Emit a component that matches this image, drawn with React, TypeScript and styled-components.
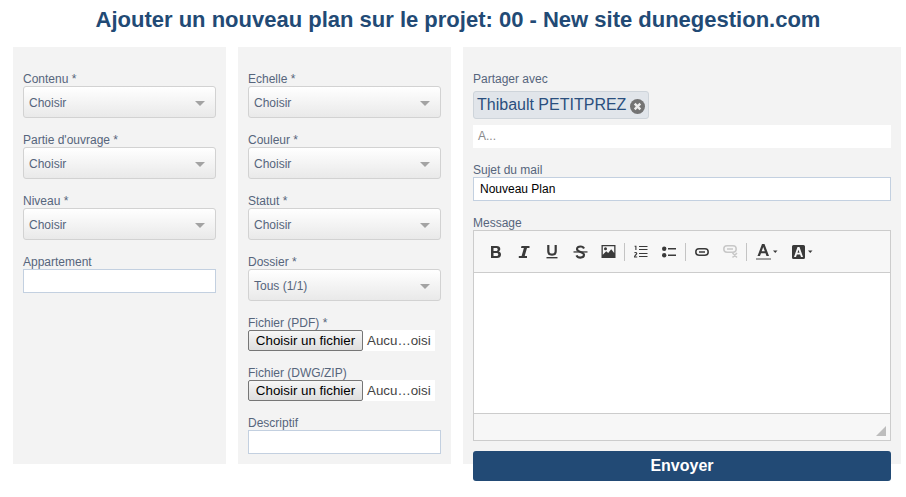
import React from "react";
import styled, { createGlobalStyle } from "styled-components";

const Global = createGlobalStyle`
  html, body { margin: 0; padding: 0; background: #fff; }
  body { width: 906px; height: 497px; overflow: hidden; font-family: "Liberation Sans", Arial, sans-serif; }
  * { box-sizing: border-box; }
`;
const Page = styled.div`padding: 0 5px 0 13px; width: 906px;`;
const Title = styled.h1`
  margin: 0; height: 47px; padding: 6px 0 0 2px; text-align: center;
  font-size: 22px; line-height: 27px; font-weight: 700; color: #224a75;
`;
const Columns = styled.div`display: grid; grid-template-columns: 213px 213px 438px; column-gap: 12px;`;
const Panel = styled.div`background: #f3f3f3; height: 417px; padding: 24px 10px 0;`;
const Field = styled.div<{ $gap?: number }>`margin-bottom: ${p => p.$gap ?? 0}px;`;
const Label = styled.div`font-size: 12px; line-height: 17px; height: 15px; color: #56657c;`;
const SelectBox = styled.div`
  height: 32px; border: 1px solid #d2d2d2; border-radius: 3px; padding: 2px 10px 0 5px;
  display: flex; align-items: center; justify-content: space-between;
  background: linear-gradient(#fff, #e9e9e9); font-size: 12px; color: #56657c;
`;
const Caret = styled.span`
  width: 0; height: 0; border-left: 5.5px solid transparent; border-right: 5.5px solid transparent;
  border-top: 5.5px solid #a3a3a3;
`;
const TextInput = styled.div`height: 24px; background: #fff; border: 1px solid #c3d0e0;`;
const FileRow = styled.div`display: flex; align-items: stretch; width: 187px; height: 21px; background: #fff; font-size: 13.33px; line-height: 19px; color: #444;`;
const FileButton = styled.div`
  width: 115px; background: linear-gradient(#f6f6f6, #dedede); border: 1px solid #767676; border-radius: 2px;
  text-align: center; color: #000; white-space: nowrap; font-size: 13.33px;
`;
const FileName = styled.span`padding-left: 4px; font-size: 13.33px; line-height: 21px; white-space: nowrap;`;
const Chip = styled.div`
  display: inline-flex; align-items: center; height: 28px; margin-top: 5px; padding: 0 3px;
  background: #e1e5ea; border: 1px solid #ced4da; border-radius: 3px; color: #2a4f7e; font-size: 16px; white-space: nowrap;
`;
const ChipClose = styled.svg`width: 15px; height: 15px; margin-left: 4px; margin-top: 2px; flex: none;`;
const ToInput = styled.div`height: 23px; background: #fff; margin-top: 6px; padding-left: 5px; font-size: 12px; line-height: 23px; color: #8a8a8a;`;
const SubjectInput = styled.div`
  height: 24px; background: #fff; border: 1px solid #c3d0e0; padding-left: 6px; font-size: 12px; line-height: 22px; color: #000;
`;
const Editor = styled.div`border: 1px solid #ccc; background: #f7f7f7;`;
const Toolbar = styled.div`height: 42px; display: flex; align-items: center; padding-left: 8px; border-bottom: 1px solid #ccc;`;
const ToolButton = styled.span<{ $w?: number }>`
  width: ${p => p.$w ?? 28}px; height: 16px; display: flex; align-items: center; justify-content: center; flex: none;
  svg { display: block; }
`;
const ToolSep = styled.span`width: 1px; height: 18px; background: #c4c4c4; margin: 0 2px; flex: none;`;
const EditArea = styled.div`height: 141px; background: #fff; border-bottom: 1px solid #ccc;`;
const EditFooter = styled.div`height: 26px; display: flex; justify-content: flex-end; align-items: flex-end; padding: 0 4px 4px 0;`;
const SendButton = styled.div`
  height: 30px; margin-top: 10px; background: #224a75; border-radius: 3px; color: #fff; text-align: center;
  font-size: 16px; font-weight: 700; line-height: 29px;
`;

const ink = "#3a3a3a";
const Sel = ({ children }: { children: string }) => (<SelectBox>{children}<Caret /></SelectBox>);

export default function App() {
  return (
    <Page>
      <Global />
      <Title>Ajouter un nouveau plan sur le projet: 00 - New site dunegestion.com</Title>
      <Columns>
        <Panel>
          <Field $gap={14}><Label>Contenu *</Label><Sel>Choisir</Sel></Field>
          <Field $gap={14}><Label>Partie d'ouvrage *</Label><Sel>Choisir</Sel></Field>
          <Field $gap={14}><Label>Niveau *</Label><Sel>Choisir</Sel></Field>
          <Field><Label>Appartement</Label><TextInput /></Field>
        </Panel>
        <Panel>
          <Field $gap={14}><Label>Echelle *</Label><Sel>Choisir</Sel></Field>
          <Field $gap={14}><Label>Couleur *</Label><Sel>Choisir</Sel></Field>
          <Field $gap={14}><Label>Statut *</Label><Sel>Choisir</Sel></Field>
          <Field $gap={14}><Label>Dossier *</Label><Sel>Tous (1/1)</Sel></Field>
          <Field $gap={14}><Label>Fichier (PDF) *</Label><FileRow><FileButton>Choisir un fichier</FileButton><FileName>Aucu…oisi</FileName></FileRow></Field>
          <Field $gap={14}><Label>Fichier (DWG/ZIP)</Label><FileRow><FileButton>Choisir un fichier</FileButton><FileName>Aucu…oisi</FileName></FileRow></Field>
          <Field><Label>Descriptif</Label><TextInput /></Field>
        </Panel>
        <Panel>
          <Field $gap={14}><Label>Partager avec</Label>
            <Chip>Thibault PETITPREZ
              <ChipClose viewBox="0 0 15 15"><circle cx="7.5" cy="7.5" r="7.5" fill="#737373" /><path d="M4.700 4.700l5.600 5.600M10.300 4.700l-5.600 5.600" stroke="#ececec" strokeWidth="2.400" /></ChipClose>
            </Chip>
            <ToInput>A...</ToInput>
          </Field>
          <Field $gap={14}><Label>Sujet du mail</Label><SubjectInput>Nouveau Plan</SubjectInput></Field>
          <Field><Label>Message</Label>
            <Editor>
              <Toolbar>
                <ToolButton><svg width="12" height="14" viewBox="0 0 12 14"><path d="M1 1h5.600c2.400 0 3.700 1.100 3.700 3 0 1.200-.7 2.100-1.700 2.500 1.400.3 2.400 1.300 2.400 2.900 0 2.200-1.500 3.600-4 3.600H1zM3.500 3v3h2.700c1 0 1.500-.6 1.500-1.500S7.200 3 6.200 3zM3.500 8v3h3.100c1.100 0 1.700-.6 1.700-1.500S7.700 8 6.600 8z" fill={ink} fillRule="evenodd" /></svg></ToolButton>
                <ToolButton><svg width="14" height="14" viewBox="0 0 14 14"><path d="M4.500 1h8v2h-2.500L7.700 11h2.300v2H1.800v-2h2.800L6.900 3H4z" fill={ink} /></svg></ToolButton>
                <ToolButton><svg width="14" height="15" viewBox="0 0 14 15"><path d="M3.300 1v6.200c0 2.300 1.400 3.500 3.700 3.500s3.700-1.200 3.700-3.500V1" fill="none" stroke={ink} strokeWidth="2.200" /><path d="M1.500 13h11v1.400h-11z" fill={ink} /></svg></ToolButton>
                <ToolButton><svg width="15" height="14" viewBox="0 0 15 14"><path d="M11 3.500C10.500 2.200 9.200 1.500 7.500 1.500c-2.100 0-3.500 1-3.500 2.600 0 3.500 7 2.200 7 5.700 0 1.700-1.500 2.800-3.600 2.800-1.800 0-3.300-.8-3.900-2.200" fill="none" stroke={ink} strokeWidth="2.100" /><path d="M0.500 6.300h14v1.300H.5z" fill={ink} /></svg></ToolButton>
                <ToolButton><svg width="15" height="13" viewBox="0 0 15 13"><path d="M.5 0h14v13H.5zM1.800 1.300v8.500l3.400-3.600 2 1.900 3-3.800 3 3.600V1.300zM4.500 2.300a1.500 1.500 0 110 3 1.500 1.500 0 010-3z" fill={ink} fillRule="evenodd" /></svg></ToolButton>
                <ToolSep />
                <ToolButton><svg width="14" height="13" viewBox="0 0 14 13"><path d="M.6 1.200h1.300V5" fill="none" stroke={ink} strokeWidth="1.100" /><path d="M5 1.500h8.500M5 4.500h8.500M5 8.500h8.500M5 11.500h8.500" fill="none" stroke={ink} strokeWidth="1.200" /><path d="M.5 8c.4-.6 2.300-.7 2.300.5 0 1-2.300 1.800-2.300 3.500H3.200" fill="none" stroke={ink} strokeWidth="1.100" /></svg></ToolButton>
                <ToolButton><svg width="14" height="12" viewBox="0 0 14 12"><circle cx="2.200" cy="2.700" r="2.200" fill={ink} /><circle cx="2.200" cy="9.300" r="2.200" fill={ink} /><path d="M6 2.700h8M6 9.300h8" stroke={ink} strokeWidth="1.600" /></svg></ToolButton>
                <ToolSep />
                <ToolButton><svg width="14" height="8" viewBox="0 0 14 8"><rect x=".8" y=".8" width="12.400" height="6.400" rx="3.200" fill="none" stroke={ink} strokeWidth="1.500" /><path d="M4 4h6" stroke={ink} strokeWidth="1.500" /></svg></ToolButton>
                <ToolButton><svg width="15" height="13" viewBox="0 0 15 13"><rect x=".8" y=".8" width="12.400" height="6.400" rx="3.200" fill="none" stroke="#c8c8c8" strokeWidth="1.500" /><path d="M4 4h6" stroke="#c8c8c8" strokeWidth="1.500" /><path d="M9.500 8l4.500 4.500M14 8l-4.500 4.500" stroke="#c8c8c8" strokeWidth="1.500" /></svg></ToolButton>
                <ToolSep />
                <ToolButton $w={36}><svg width="22" height="16" viewBox="0 0 22 16"><path d="M1.500 12L6 0h2.500L13 12h-2.500l-1-2.700h-4.500l-1 2.700zM5.700 7.300h3.100L7.250 3z" fill={ink} fillRule="evenodd" /><rect x="0" y="14" width="15" height="2" fill="#a0a0a0" /><path d="M17 6.500h4.500l-2.250 2.500z" fill={ink} /></svg></ToolButton>
                <ToolButton $w={34}><svg width="21" height="14" viewBox="0 0 21 14"><path d="M1.500 0h10A1.500 1.500 0 0113 1.500v11a1.500 1.500 0 01-1.500 1.500h-10A1.500 1.500 0 010 12.500v-11A1.500 1.500 0 011.500 0zM2 12h2l.9-2.500h3.200L9 12h2L7.500 2h-2zM5.500 7.700l1-3 1 3z" fill={ink} fillRule="evenodd" /><path d="M16 5.500h4.500l-2.250 2.500z" fill={ink} /></svg></ToolButton>
              </Toolbar>
              <EditArea />
              <EditFooter><svg width="10" height="10" viewBox="0 0 10 10"><path d="M10 0v10H0z" fill="#bdbdbd" /></svg></EditFooter>
            </Editor>
            <SendButton>Envoyer</SendButton>
          </Field>
        </Panel>
      </Columns>
    </Page>
  );
}
